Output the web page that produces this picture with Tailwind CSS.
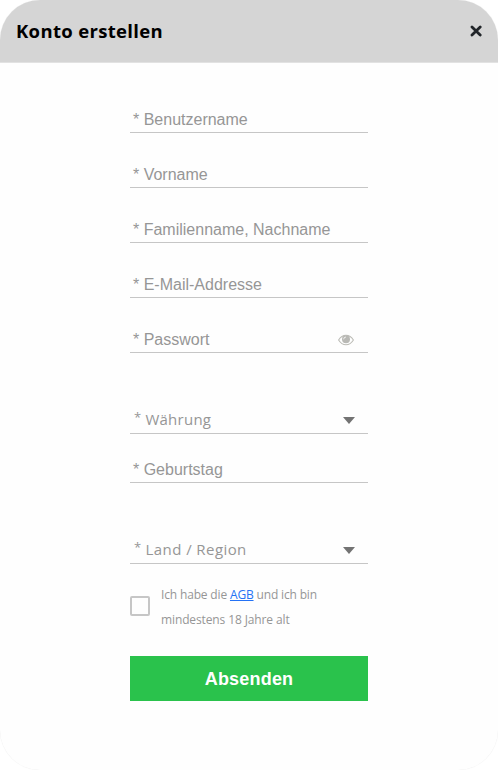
<!DOCTYPE html>
<html lang="de">
<head>
<meta charset="utf-8">
<title>Konto erstellen</title>
<script src="https://cdn.jsdelivr.net/npm/@tailwindcss/browser@4"></script>
</head>
<body class="bg-white">
<section class="flex h-[770px] w-[498px] flex-col overflow-hidden rounded-[40px] bg-[#fefefe] font-['Liberation_Sans',Arial,sans-serif] text-base text-[#969696] shadow-[0_0_1px_#e4e4e4]">
  <header class="flex h-[63px] shrink-0 items-center justify-between border-b border-[#e2e2e2] bg-[#d5d5d5] pr-4 pl-4">
    <h1 class="font-['Open_Sans',sans-serif] text-[18.5px] leading-6 font-bold tracking-[0.33px] whitespace-nowrap text-black">Konto erstellen</h1>
    <button aria-label="Schließen" class="flex"><svg class="h-3 w-3" viewBox="0 0 12 12" fill="none" stroke="#212529" stroke-width="2.800" stroke-linecap="round"><path d="M2 2 10.200 10M10.200 2 2 10"/></svg></button>
  </header>
  <form class="mx-auto flex w-[238px] flex-col pt-[42px]">
    <div class="flex flex-col gap-[27px]">
      <label class="h-7 border-b border-[#c6c6c6] pl-[3px] leading-[30px]">* Benutzername</label>
      <label class="h-7 border-b border-[#c6c6c6] pl-[3px] leading-[30px]">* Vorname</label>
      <label class="h-7 border-b border-[#c6c6c6] pl-[3px] leading-[30px]">* Familienname, Nachname</label>
      <label class="h-7 border-b border-[#c6c6c6] pl-[3px] leading-[30px]">* E-Mail-Addresse</label>
      <label class="flex h-7 justify-between border-b border-[#c6c6c6] pr-[14px] pl-[3px] leading-[30px]"><span>* Passwort</span>
        <svg class="mt-[9px] h-3 w-4" viewBox="0 0 16 12"><path d="M.6 6Q3.500 1.200 8 1.200T15.400 6Q12.500 10.800 8 10.800T.6 6Z" fill="none" stroke="#bcbcb6" stroke-width="1.100"/><circle cx="8" cy="5.300" r="4" fill="#b9b9b5"/><path d="M5.700 5.300A2.300 2.300 0 0 1 8 3" fill="none" stroke="#fefefe" stroke-width=".8"/></svg>
      </label>
    </div>
    <div class="mt-[53px] flex h-7 items-center justify-between border-b border-[#c6c6c6] pr-[13px] pl-1 font-['Open_Sans',sans-serif] text-[15px]"><span class="flex gap-1 tracking-[0.25px]"><span class="text-[13px]">*</span><span>Währung</span></span><svg class="mt-px h-[7px] w-3" viewBox="0 0 12 7"><path d="M0 0H12L6 7Z" fill="#737373"/></svg></div>
    <label class="mt-[21px] h-7 border-b border-[#c6c6c6] pl-[3px] leading-[30px]">* Geburtstag</label>
    <div class="mt-[53px] flex h-7 items-center justify-between border-b border-[#c6c6c6] pr-[13px] pl-1 font-['Open_Sans',sans-serif] text-[15px]"><span class="flex gap-1 tracking-[0.42px]"><span class="text-[13px]">*</span><span>Land / Region</span></span><svg class="mt-px h-[7px] w-3" viewBox="0 0 12 7"><path d="M0 0H12L6 7Z" fill="#737373"/></svg></div>
    <div class="mt-[18px] flex h-[50px] gap-[11px]">
      <span class="mt-[14px] h-5 w-5 shrink-0 rounded-[2px] border-2 border-[#c6c6c6]"></span>
      <p class="font-['Open_Sans',sans-serif] text-xs leading-[25px] whitespace-nowrap"><span class="tracking-[-0.16px]">Ich habe die <a href="#" class="text-[#2472f5] underline">AGB</a> und ich bin</span><br><span class="tracking-[-0.12px]">mindestens 18 Jahre alt</span></p>
    </div>
    <button type="button" class="mt-6 h-[45px] bg-[#2ac24c] text-lg font-bold tracking-[0.2px] text-white">Absenden</button>
  </form>
</section>
</body>
</html>
